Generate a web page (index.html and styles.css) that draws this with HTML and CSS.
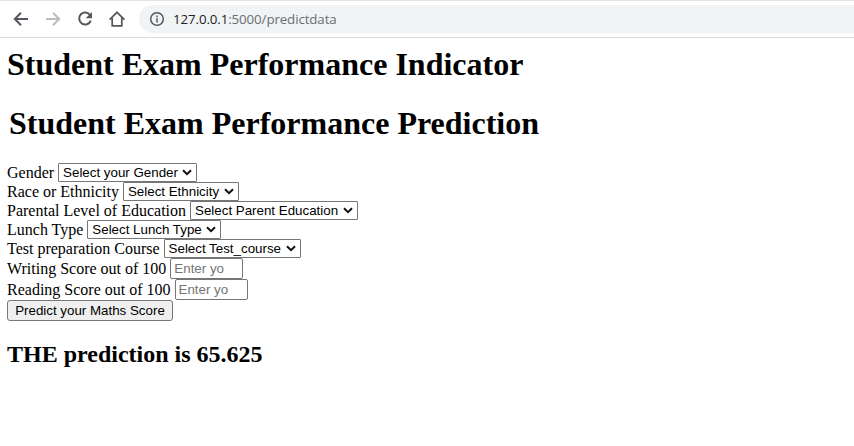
FILE: index.html
```html
<!DOCTYPE html>
<html lang="en">
<head>
<meta charset="utf-8">
<title>Student Exam Performance</title>
<link rel="stylesheet" href="styles.css">
</head>
<body>
<header class="toolbar">
  <svg class="icon" viewBox="0 0 16 16"><path d="M15 8H2.5M8 1.8 1.8 8 8 14.2"/></svg>
  <svg class="icon disabled" viewBox="0 0 16 16"><path d="M1 8h12.5M8 1.8 14.2 8 8 14.2"/></svg>
  <svg class="icon" viewBox="0 0 16 16"><path d="M13.2 4.2A6 6 0 1 0 13.8 9.6"/><path class="solid" d="M15 1v6.3H8.7z"/></svg>
  <svg class="icon home" viewBox="0 0 16 16"><path d="M.6 8.6 8 1.3l7.4 7.3M3.2 7v7.9h9.6V7"/></svg>
  <div class="address">
    <svg class="info" viewBox="0 0 16 16"><circle cx="8" cy="8" r="6.3"/><path d="M8 7.2v4.2M8 4.5v1.7"/></svg>
    <span class="url"><span class="host">127.0.0.1</span>:5000/predictdata</span>
  </div>
</header>
<main class="page">
  <h1>Student Exam Performance Indicator</h1>
  <h1 class="second">Student Exam Performance Prediction</h1>
  <form>
    <div class="row"><label for="gender">Gender</label><div class="picker gender"><select id="gender"><option>Select your Gender</option></select><svg class="chevron" viewBox="0 0 10 7"><path d="M1 1.3 5 5.2 9 1.3"/></svg></div></div>
    <div class="row"><label for="race">Race or Ethnicity</label><div class="picker race"><select id="race"><option>Select Ethnicity</option></select><svg class="chevron" viewBox="0 0 10 7"><path d="M1 1.3 5 5.2 9 1.3"/></svg></div></div>
    <div class="row"><label for="parent">Parental Level of Education</label><div class="picker parent"><select id="parent"><option>Select Parent Education</option></select><svg class="chevron" viewBox="0 0 10 7"><path d="M1 1.3 5 5.2 9 1.3"/></svg></div></div>
    <div class="row"><label for="lunch">Lunch Type</label><div class="picker lunch"><select id="lunch"><option>Select Lunch Type</option></select><svg class="chevron" viewBox="0 0 10 7"><path d="M1 1.3 5 5.2 9 1.3"/></svg></div></div>
    <div class="row"><label for="course">Test preparation Course</label><div class="picker course"><select id="course"><option>Select Test_course</option></select><svg class="chevron" viewBox="0 0 10 7"><path d="M1 1.3 5 5.2 9 1.3"/></svg></div></div>
    <div class="row score"><label for="writing">Writing Score out of 100</label><input id="writing" type="text" placeholder="Enter yo"></div>
    <div class="row score"><label for="reading">Reading Score out of 100</label><input id="reading" type="text" placeholder="Enter yo"></div>
    <button type="button">Predict your Maths Score</button>
  </form>
  <h2>THE prediction is 65.625</h2>
</main>
</body>
</html>
```
FILE: styles.css
```css
* { box-sizing: border-box; }
body {
  margin: 0;
  background: #fff;
  color: #000;
  font: 16px/19px "Liberation Serif", serif;
  overflow: hidden;
}
.toolbar {
  display: flex;
  align-items: center;
  height: 38px;
  padding-left: 13px;
  gap: 16px;
  border-top: 1px solid #e4e5e9;
  border-bottom: 1px solid #d8dadd;
}
.icon, .info {
  flex: none;
  width: 16px;
  height: 16px;
  fill: none;
  stroke: #54585d;
  stroke-width: 2;
}
.icon.disabled { stroke: #bbbcbe; }
.icon.home { stroke-width: 1.7; }
.icon .solid { fill: #54585d; stroke: none; }
.address {
  flex: 1;
  display: flex;
  align-items: center;
  height: 28px;
  margin-left: -2px;
  padding-left: 10px;
  gap: 8px;
  border-radius: 14px 0 0 14px;
  background: #f1f3f4;
}
.info { stroke-width: 1.5; }
.url {
  font: 13.3px/20px "Open Sans", sans-serif;
  letter-spacing: -0.1px;
  color: #6b6e72;
}
.host { color: #202124; }
.page { padding: 8px 7px; }
h1 {
  margin: 0;
  font-size: 32px;
  line-height: 37px;
  white-space: nowrap;
}
h1.second { margin: 22px 0 21px 2px; }
.row {
  display: flex;
  align-items: center;
  gap: 4px;
  height: 19px;
}
.score { height: 21px; }
label { white-space: nowrap; }
select, input, button {
  margin: 0;
  font: 13.333px "Liberation Sans", sans-serif;
}
.picker {
  display: grid;
  align-items: center;
}
.picker > * { grid-area: 1 / 1; }
select {
  appearance: none;
  width: 100%;
  height: 19px;
  padding: 0 0 0 4px;
  color: #000;
  background-color: #fff;
  border: 1px solid #767676;
  border-radius: 1px;
}
.chevron {
  justify-self: end;
  width: 10px;
  height: 7px;
  margin-right: 5px;
  fill: none;
  stroke: #101010;
  stroke-width: 2;
  pointer-events: none;
}
.gender { width: 139px; }
.race { width: 116px; }
.parent { width: 168px; }
.lunch { width: 134px; }
.course { width: 137px; }
input {
  width: 73px;
  height: 21px;
  padding: 1px 3px;
  border: 1px solid #767676;
  border-radius: 2px;
}
input::placeholder { color: #757575; }
button {
  display: block;
  width: 166px;
  height: 21px;
  padding: 0;
  color: #000;
  background: #efefef;
  border: 1px solid #767676;
  border-radius: 3px;
  white-space: nowrap;
}
h2 {
  margin: 20px 0 0;
  font-size: 24px;
  line-height: 27px;
}
```
